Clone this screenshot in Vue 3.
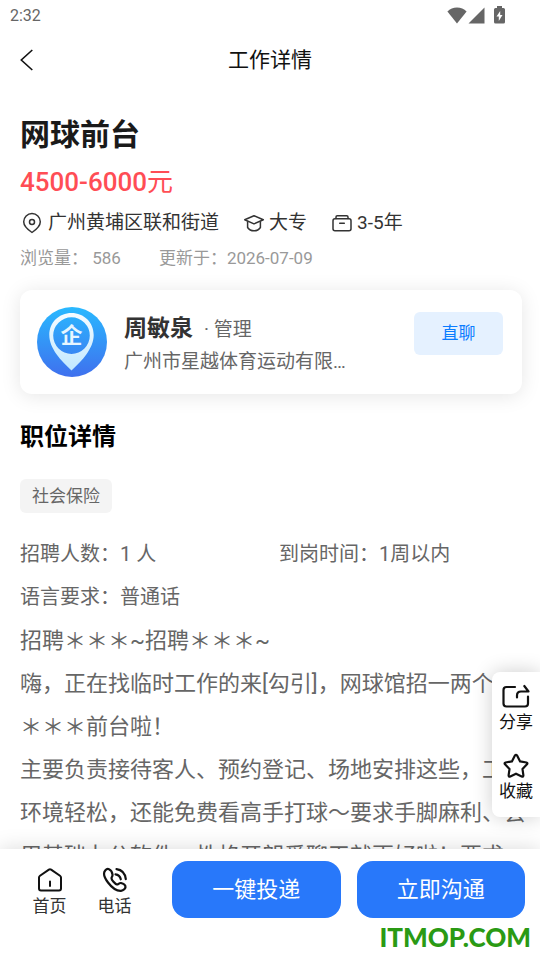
<script setup>
const job = {
  title: '网球前台',
  salary: '4500-6000',
  place: '广州黄埔区联和街道',
  degree: '大专',
  years: '3-5年',
  views: 586,
  updated: '2026-07-09',
}
const recruiter = {
  name: '周敏泉',
  role: '管理',
  company: '广州市星越体育运动有限公司',
}
const tags = ['社会保险']
const facts = [
  { label: '招聘人数', value: '1 人' },
  { label: '到岗时间', value: '1周以内' },
  { label: '语言要求', value: '普通话' },
]
const description = [
  '招聘＊＊＊~招聘＊＊＊~',
  '嗨，正在找临时工作的来[勾引]，网球馆招一两个月＊＊＊前台啦！',
  '主要负责接待客人、预约登记、场地安排这些，工作环境轻松，还能免费看高手打球～要求手脚麻利、会用基础办公软件，性格开朗爱聊天就更好啦！要求',
]
</script>

<template>
  <div class="page">
    <div class="status">
      <span class="clock">2:32</span>
      <span class="status-icons">
        <svg width="20" height="17" viewBox="0 0 20 17" fill="#666">
          <path d="M10 16.5 0.4 4.6C3 2 6.200 .6 10 .6s7 1.400 9.600 4z" />
        </svg>
        <svg width="17" height="17" viewBox="0 0 17 17" fill="#666">
          <path d="M16.500 .5v16H.5z" />
        </svg>
        <svg class="battery" width="11" height="18" viewBox="0 0 11 18">
          <path fill="#666" d="M3 0h5v2h1.500Q11 2 11 3.500v12.500Q11 17.500 9.500 17.500h-8Q0 17.500 0 16V3.500Q0 2 1.500 2H3z" />
          <path fill="#fff" d="M6.200 5 2.500 10.500h2.300V15L8.500 9H6.200z" />
        </svg>
      </span>
    </div>

    <header class="bar">
      <button class="back" type="button" aria-label="返回">
        <svg width="14" height="22" viewBox="0 0 14 22" fill="none" stroke="#111" stroke-width="1.6">
          <path d="M12.300 1 1.300 11l11 10" />
        </svg>
      </button>
      <h1>工作详情</h1>
    </header>

    <main class="content">
      <section class="summary">
        <h2 class="job-title">{{ job.title }}</h2>
        <p class="salary">{{ job.salary }}<span class="unit">元</span></p>
        <ul class="meta">
          <li>
            <svg width="24" height="24" viewBox="0 0 24 24" fill="none" stroke="#333" stroke-width="1.5" stroke-linejoin="round">
              <path d="M12 21.500C6.500 17.800 3.700 14.400 3.700 10.800a8.300 8.300 0 0 1 16.600 0c0 3.600-2.800 7-8.300 10.700z" />
              <circle cx="12" cy="11" r="2.500" />
            </svg>
            {{ job.place }}
          </li>
          <li>
            <svg width="22" height="24" viewBox="0 0 22 24" fill="none" stroke="#333" stroke-width="1.5" stroke-linejoin="round">
              <path d="M11 4.700 20.300 8.700 11 12.900 1.700 8.700z" />
              <path d="M4.600 10.300v6.200c1.400 2.200 3.700 3.300 6.400 3.300s5-1.100 6.400-3.300v-6.200" />
            </svg>
            {{ job.degree }}
          </li>
          <li>
            <svg width="22" height="24" viewBox="0 0 22 24" fill="none" stroke="#333" stroke-width="1.5" stroke-linecap="round" stroke-linejoin="round">
              <rect x="2" y="7.700" width="18" height="12" rx="2" />
              <path d="M5 7.500V6Q5 4.700 6.300 4.700h9.400Q17 4.700 17 6v1.500M8.700 12.300h4.600" />
            </svg>
            {{ job.years }}
          </li>
        </ul>
        <p class="stats">
          <span>浏览量： {{ job.views }}</span>
          <span>更新于：{{ job.updated }}</span>
        </p>
      </section>

      <section class="card">
        <svg class="avatar" width="70" height="70" viewBox="0 0 70 70">
          <defs>
            <linearGradient id="avatarSky" x1="0" y1="0" x2="0" y2="1">
              <stop offset="0" stop-color="#29b9ff" />
              <stop offset="1" stop-color="#3f70ee" />
            </linearGradient>
            <linearGradient id="avatarPin" x1="0" y1="0" x2="0" y2="1">
              <stop offset="0" stop-color="#f6fcff" />
              <stop offset="1" stop-color="#c0e8ff" />
            </linearGradient>
          </defs>
          <circle cx="35" cy="35" r="35" fill="url(#avatarSky)" />
          <path fill="url(#avatarPin)" fill-rule="evenodd" d="M34.500 6C22 6 12.300 15.500 12.300 28c0 7 3 13 7.200 19.200C23.500 53 29 58 34.500 63.500 40 58 45.500 53 49.500 47.200 53.700 41 56.700 35 56.700 28 56.700 15.500 47 6 34.500 6zM34.500 10.300a18.300 18.300 0 1 1 0 36.600a18.300 18.300 0 1 1 0-36.600z" />
          <text class="avatar-mark" x="34.500" y="36" text-anchor="middle">企</text>
        </svg>
        <div class="person">
          <p class="who"><strong>{{ recruiter.name }}</strong><span>· {{ recruiter.role }}</span></p>
          <p class="company">{{ recruiter.company }}</p>
        </div>
        <button class="chat" type="button">直聊</button>
      </section>

      <section class="detail">
        <h2 class="section-title">职位详情</h2>
        <ul class="tags">
          <li v-for="tag in tags" :key="tag">{{ tag }}</li>
        </ul>
        <ul class="facts">
          <li v-for="fact in facts" :key="fact.label">{{ fact.label }}：{{ fact.value }}</li>
        </ul>
      </section>

      <section class="description">
        <p v-for="(text, i) in description" :key="i">{{ text }}</p>
      </section>
    </main>

    <aside class="side">
      <button type="button">
        <svg width="28" height="26" viewBox="0 0 28 26" fill="none" stroke="#111" stroke-width="2.200" stroke-linecap="round" stroke-linejoin="round">
          <path d="M13 3H4.500Q1.500 3 1.500 6v13.500q0 3 3 3h18.500q3 0 3-3V12.500" />
          <path d="M15 13.500v-2q0-4 4-4H26.500L22.300 2" />
        </svg>
        <span>分享</span>
      </button>
      <button type="button">
        <svg width="28" height="26" viewBox="0 0 28 26" fill="none" stroke="#111" stroke-width="2.200" stroke-linejoin="round">
          <path d="M12.900 2.600q1.100-1.700 2.200 0l3 5.800 6.300 1.100q1.600.5.600 1.800l-4.500 4.800.9 6.200q0 1.800-1.700 1.200L14 20.700l-5.700 2.800q-1.700.6-1.700-1.200l.9-6.200L3 11.300q-1-1.300.6-1.800l6.300-1.100z" />
        </svg>
        <span>收藏</span>
      </button>
    </aside>

    <footer class="footer">
      <div class="actions">
        <nav class="links">
          <a href="#home">
            <svg width="28" height="28" viewBox="0 0 28 28" fill="none" stroke="#111" stroke-width="2" stroke-linecap="round" stroke-linejoin="round">
              <path d="M3 11.500Q3 10.500 4 9.800L12.900 3.600q1.100-.8 2.200 0L24 9.800q1 .7 1 1.700V22.500q0 2-2 2H5q-2 0-2-2zM14 15.500v4.500" />
            </svg>
            <span>首页</span>
          </a>
          <a href="#phone">
            <svg width="28" height="28" viewBox="0 0 28 28" fill="none" stroke="#111" stroke-width="2.200" stroke-linecap="round" stroke-linejoin="round">
              <path d="M8 3.200q-2-.8-3.800 1.300C2 7 3.300 11.500 7 16.500c4 5.300 9 8.500 13 8.300 2.500-.1 4.800-2.500 4.500-4.300-.2-1.500-2.500-3-4.500-3.500-2-.3-2.800 1.800-4.200 1.500-1.800-.5-5.300-4.500-5.300-6.300 0-1.500 1.300-1.700 1-3.700-.3-2.200-1.500-4.500-3.500-5.300z" />
              <path d="M14.500 8.300q4.300.4 5.300 5M15.500 3.200q8.200 1 9.300 10" />
            </svg>
            <span>电话</span>
          </a>
        </nav>
        <button class="primary" type="button">一键投递</button>
        <button class="primary" type="button">立即沟通</button>
      </div>
      <p class="brand">ITMOP.COM</p>
    </footer>
  </div>
</template>

<style>
body {
  margin: 0;
  background: #fff;
}
</style>

<style scoped>
.page {
  position: relative;
  display: flex;
  flex-direction: column;
  height: 100vh;
  overflow: hidden;
  background: #fff;
  color: #333;
  font-family: Roboto, "Noto Sans CJK SC", sans-serif;
}
h1, h2, p, ul {
  margin: 0;
  padding: 0;
}
ul {
  list-style: none;
}
button {
  border: 0;
  padding: 0;
  background: none;
  font-family: inherit;
  cursor: pointer;
}
svg {
  display: block;
  flex: none;
}
.status {
  display: flex;
  align-items: center;
  justify-content: space-between;
  padding: 0 35px 0 10px;
  height: 30px;
  color: #666;
  font-size: 16px;
}
.status-icons {
  display: flex;
  align-items: center;
  gap: 1px;
}
.battery {
  margin-left: 8px;
}
.bar {
  display: grid;
  grid-template-columns: 60px 1fr 60px;
  align-items: center;
  height: 58px;
  flex: none;
}
.back {
  display: flex;
  align-items: center;
  padding: 2px 0 0 20px;
  height: 44px;
}
.bar h1 {
  padding-bottom: 2px;
  color: #111;
  font-size: 21px;
  font-weight: 400;
  text-align: center;
}
.content {
  flex: 1;
  min-height: 0;
  overflow: hidden;
  padding-top: 23px;
}
.summary, .detail {
  padding: 0 18px 0 20px;
}
.job-title {
  color: #1a1a1a;
  font-size: 30px;
  font-weight: 700;
  line-height: 48px;
}
.salary {
  color: #ff4d55;
  font-size: 26px;
  font-weight: 500;
  line-height: 46px;
}
.unit {
  font-weight: 400;
}
.meta {
  display: flex;
  gap: 24px;
  font-size: 19px;
  line-height: 36px;
}
.meta li {
  display: flex;
  align-items: center;
  gap: 4px;
}
.stats {
  display: flex;
  gap: 38px;
  color: #999;
  font-size: 17px;
  line-height: 34px;
}
.card {
  display: flex;
  align-items: center;
  gap: 17px;
  box-sizing: border-box;
  height: 104px;
  margin: 15px 18px 0 20px;
  padding: 0 19px 0 17px;
  border-radius: 12px;
  background: #fff;
  box-shadow: 0 2px 20px rgba(0, 0, 0, .1);
}
.avatar-mark {
  fill: #e6f6ff;
  font-family: "Noto Sans CJK SC", sans-serif;
  font-size: 22px;
  font-weight: 700;
}
.person {
  flex: 1;
  min-width: 0;
  padding-top: 7px;
}
.who {
  display: flex;
  align-items: baseline;
  gap: 11px;
  color: #666;
  font-size: 19px;
  line-height: 32px;
}
.who strong {
  color: #333;
  font-size: 23px;
}
.company {
  max-width: 224px;
  overflow: hidden;
  color: #666;
  font-size: 19px;
  line-height: 32px;
  text-overflow: ellipsis;
  white-space: nowrap;
}
.chat {
  width: 89px;
  height: 43px;
  margin-bottom: 17px;
  padding-bottom: 5px;
  border-radius: 6px;
  background: #e5f1ff;
  color: #0a7cff;
  font-size: 17px;
}
.section-title {
  margin-top: 25px;
  color: #000;
  font-size: 24px;
  font-weight: 700;
  line-height: 36px;
}
.tags {
  display: flex;
  gap: 12px;
  margin-top: 24px;
}
.tags li {
  padding: 0 12px;
  border-radius: 6px;
  background: #f4f4f4;
  color: #666;
  font-size: 17px;
  line-height: 34px;
}
.facts {
  display: grid;
  grid-template-columns: 1fr 1fr;
  column-gap: 16px;
  margin-top: 20px;
  color: #666;
  font-size: 20px;
  line-height: 43px;
}
.description {
  padding: 0 12px 0 20px;
  color: #666;
  font-size: 22px;
  line-height: 43px;
}
.side {
  position: absolute;
  right: 0;
  bottom: 143px;
  display: flex;
  flex-direction: column;
  gap: 19px;
  padding: 12px 0 14px;
  border-radius: 8px 0 0 8px;
  background: #fff;
  box-shadow: 0 0 20px rgba(0, 0, 0, .2);
}
.side button {
  display: flex;
  flex-direction: column;
  align-items: center;
  width: 48px;
  color: #111;
  font-size: 17px;
  line-height: 24px;
}
.footer {
  position: relative;
  padding: 12px 0 4px;
  background: #fff;
  box-shadow: 0 0 20px rgba(0, 0, 0, .15);
}
.actions {
  display: flex;
  gap: 16px;
  padding: 0 15px 0 17px;
}
.links {
  display: flex;
  margin-right: 9px;
}
.links a {
  display: flex;
  flex-direction: column;
  align-items: center;
  width: 65px;
  padding-top: 5px;
  color: #333;
  font-size: 17px;
  line-height: 24px;
  text-decoration: none;
}
.primary {
  flex: 1;
  height: 57px;
  padding-bottom: 5px;
  border-radius: 16px;
  background: #2878fa;
  color: #fff;
  font-size: 22px;
}
.brand {
  padding-right: 9px;
  color: #2a9a14;
  font-family: Lato, "Open Sans", sans-serif;
  font-size: 26px;
  font-weight: 900;
  line-height: 38px;
  text-align: right;
}
</style>
